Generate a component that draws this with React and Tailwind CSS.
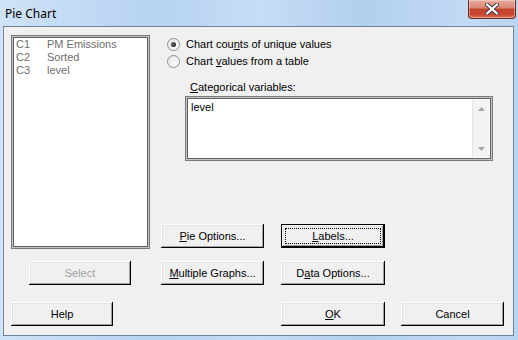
import React from "react";

const ui = "font-['Liberation_Sans',Arial,sans-serif] text-[11px] leading-[13px]";

// classic raised 3d button
const raised =
  "shadow-[inset_-1px_-1px_#000,inset_1px_1px_#fff,inset_-2px_-2px_#a0a0a0,inset_2px_2px_#e3e3e3]";
const sunken =
  "border border-[#7a7a7a] shadow-[inset_0_0_0_1px_#c4c4c4,inset_0_0_0_2px_#5f5f5f]";

function Button({ children, width = "w-[103px]", disabled, isDefault }) {
  if (isDefault) {
    return (
      <div className={`${width} h-[24px] border border-black bg-[#f0f0f0] flex`}>
        <div className={`flex-1 ${raised} p-[3px] flex`}>
          <div className="flex-1 border border-dotted border-black flex items-center justify-center text-black">
            {children}
          </div>
        </div>
      </div>
    );
  }
  return (
    <div
      className={`${width} h-[24px] bg-[#f0f0f0] ${raised} flex items-center justify-center ${
        disabled ? "text-[#a0a0a0]" : "text-black"
      }`}
    >
      {children}
    </div>
  );
}

function Radio({ checked, children }) {
  return (
    <div className="h-[17px] flex items-center">
      <div className="w-[13px] h-[13px] rounded-full border border-[#8e8f8f] bg-[linear-gradient(135deg,#e6e6e6,#ffffff)] flex items-center justify-center">
        {checked && (
          <div className="w-[5px] h-[5px] rounded-full bg-[radial-gradient(circle_at_35%_35%,#6a6a6a,#111)]" />
        )}
      </div>
      <span className="ml-[6px] text-black">{children}</span>
    </div>
  );
}

function CloseButton() {
  return (
    <div className="w-[48px] h-[19px] rounded-b-[4px] border border-t-0 border-[#6e2a20] bg-[linear-gradient(to_bottom,#e9a99a_0%,#d98674_45%,#c4432d_50%,#c9462f_80%,#e07356_100%)] flex items-center justify-center shadow-[inset_0_0_0_1px_rgba(255,255,255,0.35)]">
      <svg width="14" height="12" viewBox="0 0 14 12">
        <path
          d="M2 1.5 L12 10.5 M12 1.5 L2 10.5"
          stroke="#3d3d3d"
          strokeWidth="4"
          strokeLinecap="round"
        />
        <path
          d="M2 1.5 L12 10.5 M12 1.5 L2 10.5"
          stroke="#ffffff"
          strokeWidth="2.2"
          strokeLinecap="round"
        />
      </svg>
    </div>
  );
}

export default function App() {
  const columns = [
    ["C1", "PM Emissions"],
    ["C2", "Sorted"],
    ["C3", "level"],
  ];

  return (
    <div
      className={`w-[518px] h-[340px] overflow-hidden flex flex-col bg-[linear-gradient(to_right,#cfe2f7,#b7d3f1_30%,#c6ddf5_50%,#b3cfee_70%,#c2daf4_90%,#b9d4f0)] ${ui}`}
    >
      {/* title bar */}
      <div className="h-[26px] flex items-start shrink-0">
        <span className="pl-[5px] pt-[6px] text-[12px] leading-[16px] text-black font-['Noto_Sans',sans-serif]">
          Pie Chart
        </span>
        <div className="ml-auto mr-[2px]">
          <CloseButton />
        </div>
      </div>

      {/* client area */}
      <div className="ml-[3px] mr-[4px] h-[310px] border border-[#70839a] bg-[#f0f0f0] pl-[7px] pt-[8px]">
        {/* top section */}
        <div className="flex items-start">
          <div className={`w-[139px] h-[214px] bg-white ${sunken} p-[3px] pl-[4px] pt-[2px]`}>
            {columns.map(([id, name]) => (
              <div key={id} className="flex h-[13px] text-[#6d6d6d]">
                <span className="w-[31px]">{id}</span>
                <span>{name}</span>
              </div>
            ))}
          </div>

          <div className="ml-[11px] flex flex-col">
            <div className="ml-[6px] mt-[1px]">
              <Radio checked>
                Chart cou<u>n</u>ts of unique values
              </Radio>
              <Radio>
                Chart <u>v</u>alues from a table
              </Radio>
            </div>
            <div className="ml-[29px] mt-[11px] h-[14px] text-black">
              <u>C</u>ategorical variables:
            </div>
            <div className={`ml-[24px] mt-[1px] w-[308px] h-[65px] bg-white ${sunken} p-[3px] flex`}>
              <div className="flex-1 pl-[2px] pt-[1px] text-black">level</div>
              <div className="w-[17px] bg-[#f3f3f3] border-l border-[#e6e6e6] flex flex-col justify-between">
                <div className="h-[17px] flex items-center justify-center">
                  <svg width="7" height="4" viewBox="0 0 7 4">
                    <path d="M3.5 0 L7 4 L0 4 Z" fill="#a3a3a3" />
                  </svg>
                </div>
                <div className="h-[17px] flex items-center justify-center">
                  <svg width="7" height="4" viewBox="0 0 7 4">
                    <path d="M0 0 L7 0 L3.5 4 Z" fill="#a3a3a3" />
                  </svg>
                </div>
              </div>
            </div>
            <div className="mt-[63px] flex gap-[17px]">
              <Button>
                <u>P</u>ie Options...
              </Button>
              <Button isDefault width="w-[104px]">
                <u>L</u>abels...
              </Button>
            </div>
          </div>
        </div>

        {/* middle buttons */}
        <div className="mt-[12px] flex">
          <div className="ml-[18px]">
            <Button disabled width="w-[102px]">
              Select
            </Button>
          </div>
          <div className="ml-[30px]">
            <Button>
              <u>M</u>ultiple Graphs...
            </Button>
          </div>
          <div className="ml-[17px]">
            <Button width="w-[104px]">
              D<u>a</u>ta Options...
            </Button>
          </div>
        </div>

        {/* bottom buttons */}
        <div className="mt-[17px] flex">
          <Button width="w-[102px]">Help</Button>
          <div className="ml-[168px]">
            <Button width="w-[104px]">
              <u>O</u>K
            </Button>
          </div>
          <div className="ml-[16px]">
            <Button>Cancel</Button>
          </div>
        </div>
      </div>
    </div>
  );
}
